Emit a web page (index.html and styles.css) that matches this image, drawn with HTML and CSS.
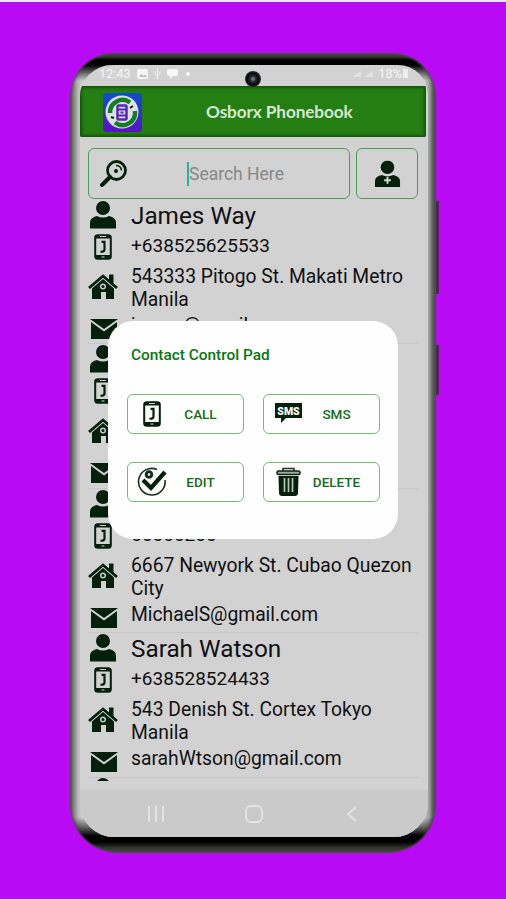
FILE: index.html
```html
<!DOCTYPE html>
<html lang="en">
<head>
<meta charset="utf-8">
<title>Osborx Phonebook</title>
<link rel="stylesheet" href="styles.css">
</head>
<body>
<svg class="defs" width="0" height="0" aria-hidden="true">
  <symbol id="person" viewBox="0 0 28 28"><circle cx="14" cy="7" r="7"/><path d="M1 27.500v-6q0-5 7-6.500q6 3 12 0q7 1.500 7 6.500v6z"/></symbol>
  <symbol id="phone" viewBox="0 0 18 26"><rect x="1.200" y="1.200" width="15.600" height="23.600" rx="2.500" fill="none" stroke="currentColor" stroke-width="2"/><path d="M1 1h16v3.500H1zM1 21h16v4H1z"/><path d="M7.500 7.800h3v7.700q0 2.500-4 2.200" fill="none" stroke="currentColor" stroke-width="2.200"/><path d="M6 2.500h6M7.500 23h3" stroke="#c8d0c8" stroke-width="1.200"/></symbol>
  <symbol id="home" viewBox="0 0 30 25"><path d="M1 14L15 2l14 12" fill="none" stroke="currentColor" stroke-width="2.800"/><path d="M21 .500h4.500v10L21 6zM4 14.500L15 5 26 14.500V25h-8v-7h-5v7H4z"/><circle cx="15" cy="12.500" r="2.300" fill="none" stroke="#c4c9c4" stroke-width="1.500"/></symbol>
  <symbol id="mail" viewBox="0 0 28 20"><path d="M0 0h28L14 10zM1 3l13 9.500L27 3v17H1z"/></symbol>
</svg>
<main class="phone">
  <i class="key key-volume"></i><i class="key key-power"></i>
  <div class="screen">
    <header class="status">
      <div class="status-left"><span>12:43</span>
        <svg width="11" height="10" viewBox="0 0 11 10"><rect width="11" height="10" rx="2" fill="#f5f5f5"/><path d="M2 8l2.500-3 2 2L8 5.500 10 8z" fill="#bbb"/></svg>
        <svg width="7" height="11" viewBox="0 0 7 11" fill="none" stroke="#f0f0f0"><path d="M3.500 0v11M1 3v3l2.500 2L6 6V3"/></svg>
        <svg width="11" height="10" viewBox="0 0 11 10" fill="#f7f7f7"><path d="M2 0h7q2 0 2 2v3q0 2-2 2H6L3 10V7H2Q0 7 0 5V2Q0 0 2 0z"/></svg>
        <b class="dot"></b>
      </div>
      <div class="status-right">
        <svg width="22" height="8" viewBox="0 0 22 8" fill="#e3e3e3"><path d="M0 7l9-6v6zM12 7l9-6v6z"/></svg>
        <span>18%</span><b class="battery"></b>
      </div>
    </header>
    <i class="camera"></i>
    <div class="appbar">
      <svg class="logo" width="39" height="39" viewBox="0 0 39 39"><defs><linearGradient id="blue" x2="0" y2="1"><stop stop-color="#0a50cc"/><stop offset="1" stop-color="#5c10c8"/></linearGradient></defs><rect width="39" height="39" rx="4" fill="url(#blue)"/><circle cx="19" cy="19" r="16.500" fill="#dce2e0"/><path d="M7 20A12.500 12.500 0 0 1 27 9.500M32 18A12.500 12.500 0 0 1 12 29.500" fill="none" stroke="#137f25" stroke-width="4.500"/><rect x="14.500" y="12.500" width="9" height="14" rx="1" fill="#ddd" stroke="#5526bd" stroke-width="2.500"/><path d="M15 16.500h8M15 22.500h8M17.500 19.500h3" stroke="#5526bd" stroke-width="2.200"/><path d="M27 15l3-2M8 24l3 1" stroke="#123" stroke-width="2"/></svg>
      <h1>Osborx Phonebook</h1>
    </div>
    <div class="tools">
      <div class="search">
        <svg width="27" height="27" viewBox="0 0 27 27"><circle cx="16.500" cy="10.500" r="9" fill="none" stroke="#03200a" stroke-width="2.800"/><path d="M10 17l-8 8" stroke="#03200a" stroke-width="4" stroke-linecap="round"/><circle cx="16" cy="11" r="2" fill="#03200a"/><path d="M16 5.500q5 0 5.500 5" fill="none" stroke="#03200a" stroke-width="1.500"/></svg>
        <i class="caret"></i><span>Search Here</span>
      </div>
      <div class="add"><svg width="27" height="28" viewBox="0 0 28 28"><use href="#person"/><path d="M14 17v7M10.500 20.500h7" stroke="#d2dad2" stroke-width="2"/></svg></div>
    </div>
    <div class="list">
      <section class="contact">
        <svg class="i-person"><use href="#person"/></svg><h2>James Way</h2>
        <svg class="i-phone"><use href="#phone"/></svg><p class="tel">+638525625533</p>
        <svg class="i-home"><use href="#home"/></svg><p class="addr">543333 Pitogo St. Makati Metro<br>Manila</p>
        <svg class="i-mail"><use href="#mail"/></svg><p class="email">james@gmail.com</p>
      </section>
      <section class="contact">
        <svg class="i-person"><use href="#person"/></svg><h2></h2>
        <svg class="i-phone"><use href="#phone"/></svg><p class="tel"></p>
        <svg class="i-home"><use href="#home"/></svg><p class="addr"></p>
        <svg class="i-mail"><use href="#mail"/></svg><p class="email"></p>
      </section>
      <section class="contact">
        <svg class="i-person"><use href="#person"/></svg><h2></h2>
        <svg class="i-phone"><use href="#phone"/></svg><p class="tel">66666266</p>
        <svg class="i-home"><use href="#home"/></svg><p class="addr">6667 Newyork St. Cubao Quezon<br>City</p>
        <svg class="i-mail"><use href="#mail"/></svg><p class="email">MichaelS@gmail.com</p>
      </section>
      <section class="contact">
        <svg class="i-person"><use href="#person"/></svg><h2>Sarah Watson</h2>
        <svg class="i-phone"><use href="#phone"/></svg><p class="tel">+638528524433</p>
        <svg class="i-home"><use href="#home"/></svg><p class="addr">543 Denish St. Cortex Tokyo<br>Manila</p>
        <svg class="i-mail"><use href="#mail"/></svg><p class="email">sarahWtson@gmail.com</p>
      </section>
      <section class="contact"><svg class="i-person"><use href="#person"/></svg></section>
    </div>
    <nav class="navbar">
      <svg width="18" height="18" viewBox="0 0 18 18"><path d="M2 1v16M9 1v16M16 1v16"/></svg>
      <svg width="18" height="18" viewBox="0 0 18 18"><rect x="1" y="1" width="16" height="16" rx="5"/></svg>
      <svg width="18" height="18" viewBox="0 0 18 18"><path d="M13 2L5 9l8 7"/></svg>
    </nav>
  </div>
  <div class="dialog">
    <h3>Contact Control Pad</h3>
    <div class="actions">
      <button><svg width="18" height="26"><use href="#phone"/></svg><span>CALL</span></button>
      <button><svg width="27" height="21" viewBox="0 0 27 21"><path d="M0 0h27v15H11l-5 5v-5H0z" fill="#03200a"/><text x="13.500" y="11.500" text-anchor="middle" class="sms">SMS</text></svg><span>SMS</span></button>
      <button><svg width="30" height="30" viewBox="0 0 30 30" fill="none" stroke="#163020"><path d="M20 2.500A13.300 13.300 0 1 0 28 13" stroke-width="1.600"/><circle cx="12" cy="7.500" r="2.800" stroke-width="3"/><path d="M6 13l8 8L28 5" stroke="#03200a" stroke-width="4.200"/></svg><span>EDIT</span></button>
      <button><svg width="25" height="29" viewBox="0 0 25 29"><path d="M7 4V1.500h11V4" fill="none" stroke="#213527" stroke-width="1.600"/><rect x="1" y="4" width="23" height="3.500" rx="1.500" fill="#9dab9f" stroke="#092311" stroke-width="1.600"/><path d="M2.500 9h20l-.5 17q-.2 3-3 3H6q-2.800 0-3-3z" fill="#03200a"/><path d="M8.500 11v14M12.500 11v14M16.500 11v14" stroke="#b7c4b9" stroke-width="1.700"/></svg><span>DELETE</span></button>
    </div>
  </div>
</main>
</body>
</html>
```
FILE: styles.css
```css
* { box-sizing: border-box; }
body {
  margin: 0;
  height: 900px;
  padding: 51px 70px 0;
  background: #b80af5;
  border-top: 2px solid #f0e6f5;
  border-bottom: 1px solid #f0e6f5;
  font-family: Roboto, "Liberation Sans", sans-serif;
  overflow: hidden;
}
h1, h2, h3, p { margin: 0; font-weight: 400; }
.defs { position: absolute; }
.phone {
  position: relative;
  width: 366px;
  height: 800px;
  padding: 12px 8px 16px 10px;
  border-radius: 44px 44px 48px 48px;
  box-shadow: inset 0 0 2px 1px #4b5148;
  background:
    linear-gradient(#454a42, #30332e 4px, #000 7px, #000 12px, transparent 28px),
    linear-gradient(transparent 764px, #000 783px, #000 789px, #34352f 795px, #454640 800px),
    linear-gradient(90deg, #485048, #777 3px, #b8b8b8 8px, #d0d0d0 12px, #d0d0d0 354px, #a0a0a0 359px, #555d54 363px, #424b40);
}
.key { position: absolute; right: -3px; width: 3px; background: #552060; border-top: 2px solid #303e2d; border-bottom: 2px solid #303e2d; }
.key-volume { top: 148px; height: 93px; }
.key-power { top: 292px; height: 50px; }
.screen {
  position: relative;
  height: 772px;
  border-radius: 32px 30px 34px 34px;
  background: #d2d2d2;
  overflow: hidden;
  display: flex;
  flex-direction: column;
  color: #03200a;
  fill: #03200a;
}
.status {
  height: 21px;
  flex: none;
  padding: 0 20px 4px 19px;
  display: flex;
  justify-content: space-between;
  align-items: center;
  color: #f6f6f6;
  font-size: 12.500px;
  letter-spacing: .1px;
}
.status-left, .status-right { display: flex; align-items: center; gap: 6px; }
.status-right { gap: 4px; }
.dot { width: 4px; height: 4px; margin-left: 2px; border-radius: 50%; background: #f7f7f7; }
.battery { width: 5px; height: 9px; margin-left: -3px; background: #eee; }
.camera {
  position: absolute;
  z-index: 2;
  left: 165px;
  top: 6px;
  width: 16px;
  height: 16px;
  border-radius: 50%;
  background: radial-gradient(circle, #70747c 0 1px, #24262b 3px, #07080b 6px, #333 8px);
}
.appbar {
  height: 51px;
  flex: none;
  margin-right: 2px;
  padding: 1px 0 0 23px;
  display: flex;
  align-items: center;
  border-radius: 2px;
  background: #257e12;
  box-shadow: inset 0 0 3px 2px #105709;
}
.appbar h1 {
  margin-left: 64px;
  color: #d5e7d0;
  font: 700 17.200px/24px Lato, sans-serif;
  letter-spacing: -.1px;
  white-space: nowrap;
}
.tools {
  height: 63px;
  flex: none;
  padding: 11px 10px 0 8px;
  display: flex;
  gap: 6px;
}
.search, .add { height: 51px; border: 1.500px solid #4da052; border-radius: 6px; display: flex; align-items: center; }
.search { width: 262px; padding-left: 11px; color: #888; font-size: 17.500px; }
.caret { width: 2px; height: 24px; margin-left: 60px; background: #22b5a4; }
.add { width: 62px; justify-content: center; }
.list { height: 581px; flex: none; overflow: hidden; padding: 0 9px 0 8px; color: #111; }
.contact {
  height: 144.400px;
  display: grid;
  grid-template-columns: 30px 1fr;
  grid-template-rows: 32px 29px 51px 31.400px;
  column-gap: 13px;
  border-bottom: 1px solid #c5c5c5;
}
.contact svg { justify-self: center; color: #03200a; }
.i-person { width: 28px; height: 28px; margin-top: 1px; }
.i-phone { width: 18px; height: 26px; margin-top: 2px; }
.i-home { width: 30px; height: 25px; margin-top: 13px; }
.i-mail { width: 28px; height: 20px; margin: 7px 0 0 1px; }
.contact h2 { font-size: 24.300px; line-height: 32px; }
.contact p { font-size: 19.300px; line-height: 23px; white-space: nowrap; }
.contact .tel { padding-top: 2px; font-size: 19px; }
.contact .addr { padding-top: 4px; }
.contact .email { padding-top: 2px; }
.list .contact:nth-child(5) { position: relative; top: -1px; }
.navbar {
  height: 47px;
  flex: none;
  margin-top: 9px;
  padding: 0 67px;
  display: flex;
  justify-content: space-between;
  align-items: center;
  background: #cacaca;
  fill: none;
  stroke: #e5e5e5;
  stroke-width: 1.800px;
}
.dialog {
  position: absolute;
  left: 38px;
  top: 268px;
  width: 290px;
  height: 218px;
  padding: 24px 18px 0 19px;
  border-radius: 25px;
  background: #fefefe;
}
.dialog h3 { margin-left: 4px; color: #087712; font-size: 15.400px; line-height: 20px; font-weight: 500; white-space: nowrap; }
.actions { margin-top: 29px; display: grid; grid-template-columns: 117px 117px; gap: 28px 19px; }
button {
  height: 40px;
  padding: 0 10px 1px 8px;
  display: grid;
  grid-template-columns: 32px 1fr;
  align-items: center;
  justify-items: center;
  border: 1.500px solid #76ba78;
  border-radius: 6px;
  background: #fefefe;
  color: #03200a;
  fill: #03200a;
  font: 500 13.500px Roboto, sans-serif;
}
button span { color: #126d18; }
.sms { font: 900 10.500px Roboto, sans-serif; fill: #fff; }
```
